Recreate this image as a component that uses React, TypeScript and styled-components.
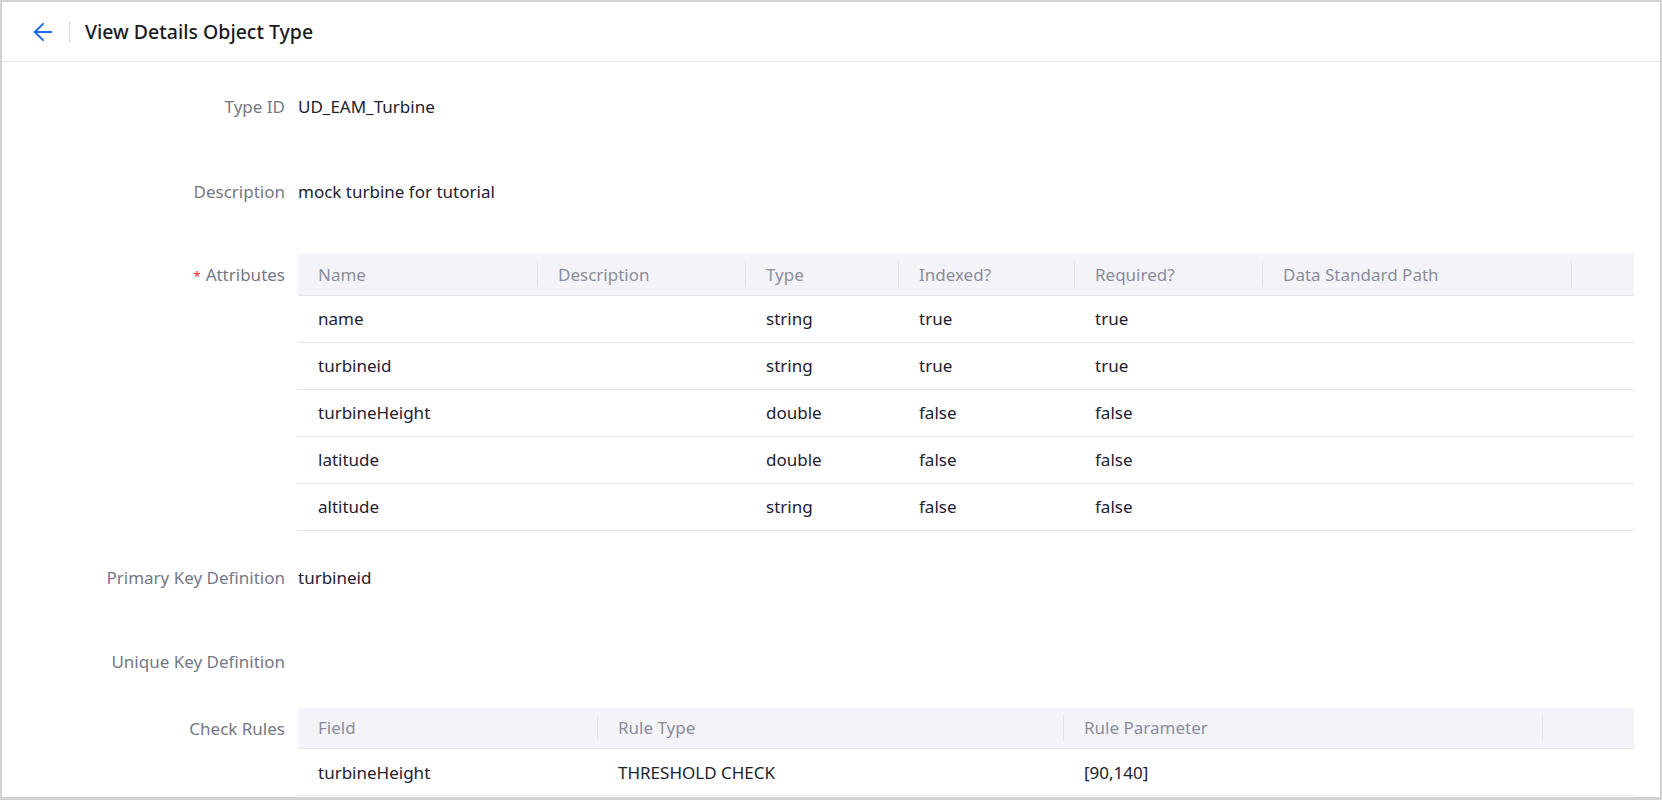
import styled, { createGlobalStyle } from 'styled-components';
import { ArrowLeft } from 'lucide-react';

interface IColumn {
  title: string;
  width: number;
}

const GlobalStyle = createGlobalStyle`
  * {
    box-sizing: border-box;
  }
  html, body {
    margin: 0;
    padding: 0;
    background: #ffffff;
  }
  body {
    font-family: 'Noto Sans', 'Open Sans', sans-serif;
    font-size: 17px;
    color: #1e2030;
  }
`;

const Frame = styled.div`
  width: 1662px;
  height: 800px;
  border: 2px solid #d2d2d2;
  border-bottom-width: 3px;
  overflow: hidden;
  background: #ffffff;
`;

const Header = styled.div`
  display: flex;
  align-items: center;
  height: 60px;
  padding-left: 27px;
  border-bottom: 1px solid #e4e4e4;
`;

const BackButton = styled.button`
  display: flex;
  align-items: center;
  justify-content: center;
  padding: 0;
  border: none;
  background: transparent;
  color: #1f6bf5;
  cursor: pointer;
`;

const Divider = styled.span`
  width: 1px;
  height: 22px;
  margin: 0 15px 0 12px;
  background: #dedede;
`;

const Title = styled.h1`
  margin: 0;
  font-size: 19.5px;
  font-weight: 500;
  color: #1b1b1f;
`;

const Body = styled.div`
  padding: 25px 26px 0 0;
`;

const Item = styled.div<{ gapAfter: number }>`
  display: grid;
  grid-template-columns: 283px 1fr;
  column-gap: 13px;
  margin-bottom: ${(props) => props.gapAfter}px;
`;

const Label = styled.div<{ lineHeight: number }>`
  text-align: right;
  line-height: ${(props) => props.lineHeight}px;
  color: #747887;
  white-space: nowrap;
`;

const Required = styled.span`
  color: #f5222d;
  margin-right: 5px;
  font-size: 13px;
`;

const Value = styled.div`
  line-height: 40px;
  min-height: 40px;
  color: #1e2030;
`;

const Table = styled.table`
  width: 100%;
  border-collapse: collapse;
  table-layout: fixed;
`;

const HeadCell = styled.th<{ last?: boolean }>`
  position: relative;
  height: 41px;
  padding: 0 20px;
  background: #f4f4f8;
  border-bottom: 1px solid #e3e3e8;
  text-align: left;
  font-weight: 400;
  color: #8a8c9c;
  white-space: nowrap;
  &::after {
    content: '';
    display: ${(props) => (props.last ? 'none' : 'block')};
    position: absolute;
    right: 0;
    top: 50%;
    width: 1px;
    height: 26px;
    transform: translateY(-50%);
    background: #e2e2e8;
  }
`;

const Cell = styled.td`
  height: 47px;
  padding: 0 20px;
  border-bottom: 1px solid #e8e8ec;
  color: #1e2030;
  white-space: nowrap;
`;

const attributeColumns: IColumn[] = [
  { title: 'Name', width: 240 },
  { title: 'Description', width: 208 },
  { title: 'Type', width: 153 },
  { title: 'Indexed?', width: 176 },
  { title: 'Required?', width: 188 },
  { title: 'Data Standard Path', width: 309 },
  { title: '', width: 62 },
];

const attributes = [
  ['name', '', 'string', 'true', 'true', '', ''],
  ['turbineid', '', 'string', 'true', 'true', '', ''],
  ['turbineHeight', '', 'double', 'false', 'false', '', ''],
  ['latitude', '', 'double', 'false', 'false', '', ''],
  ['altitude', '', 'string', 'false', 'false', '', ''],
];

const ruleColumns: IColumn[] = [
  { title: 'Field', width: 300 },
  { title: 'Rule Type', width: 466 },
  { title: 'Rule Parameter', width: 479 },
  { title: '', width: 91 },
];

const rules = [['turbineHeight', 'THRESHOLD CHECK', '[90,140]', '']];

const DataTable = ({ columns, rows }: { columns: IColumn[]; rows: string[][] }) => (
  <Table>
    <colgroup>
      {columns.map((c, i) => (
        <col key={i} style={{ width: c.width }} />
      ))}
    </colgroup>
    <thead>
      <tr>
        {columns.map((c, i) => (
          <HeadCell key={i} last={i === columns.length - 1}>
            {c.title}
          </HeadCell>
        ))}
      </tr>
    </thead>
    <tbody>
      {rows.map((row, i) => (
        <tr key={i}>
          {row.map((v, j) => (
            <Cell key={j}>{v}</Cell>
          ))}
        </tr>
      ))}
    </tbody>
  </Table>
);

const App = () => {
  return (
    <>
      <GlobalStyle />
      <Frame>
        <Header>
          <BackButton>
            <ArrowLeft size={28} strokeWidth={1.7} />
          </BackButton>
          <Divider />
          <Title>View Details Object Type</Title>
        </Header>
        <Body>
          <Item gapAfter={45}>
            <Label lineHeight={40}>Type ID</Label>
            <Value>UD_EAM_Turbine</Value>
          </Item>
          <Item gapAfter={42}>
            <Label lineHeight={40}>Description</Label>
            <Value>mock turbine for tutorial</Value>
          </Item>
          <Item gapAfter={27}>
            <Label lineHeight={41}>
              <Required>*</Required>
              Attributes
            </Label>
            <DataTable columns={attributeColumns} rows={attributes} />
          </Item>
          <Item gapAfter={44}>
            <Label lineHeight={40}>Primary Key Definition</Label>
            <Value>turbineid</Value>
          </Item>
          <Item gapAfter={26}>
            <Label lineHeight={40}>Unique Key Definition</Label>
            <Value />
          </Item>
          <Item gapAfter={0}>
            <Label lineHeight={41}>Check Rules</Label>
            <DataTable columns={ruleColumns} rows={rules} />
          </Item>
        </Body>
      </Frame>
    </>
  );
};

export default App;
